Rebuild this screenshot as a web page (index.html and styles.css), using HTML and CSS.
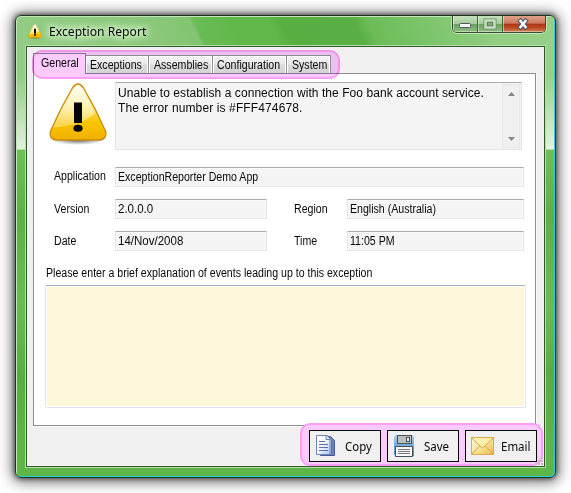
FILE: index.html
```html
<!DOCTYPE html>
<html lang="en">
<head>
<meta charset="utf-8">
<title>Exception Report</title>
<link rel="stylesheet" href="styles.css">
</head>
<body>
<svg class="defs" width="0" height="0" aria-hidden="true">
  <defs>
    <linearGradient id="gold" x1="0" y1="0" x2="0" y2="1">
      <stop offset="0" stop-color="#fff6c4"/><stop offset=".45" stop-color="#fbdc55"/>
      <stop offset=".7" stop-color="#f8c400"/><stop offset="1" stop-color="#f0b000"/>
    </linearGradient>
    <linearGradient id="shine" x1="0" y1="0" x2="0" y2="1">
      <stop offset="0" stop-color="#fff" stop-opacity=".75"/><stop offset="1" stop-color="#fff" stop-opacity=".3"/>
    </linearGradient>
    <linearGradient id="paper" x1="0" y1="0" x2="1" y2="1">
      <stop offset="0" stop-color="#fff"/><stop offset=".5" stop-color="#f2f6ff"/><stop offset="1" stop-color="#a5c2f2"/>
    </linearGradient>
    <linearGradient id="disk" x1="0" y1="0" x2="0" y2="1">
      <stop offset="0" stop-color="#a9d3f3"/><stop offset="1" stop-color="#4284c4"/>
    </linearGradient>
    <linearGradient id="mail" x1="0" y1="0" x2="1" y2="1">
      <stop offset="0" stop-color="#fffbdc"/><stop offset=".5" stop-color="#fbe49b"/><stop offset="1" stop-color="#ecb843"/>
    </linearGradient>
    <radialGradient id="ground"><stop offset="0" stop-color="#333" stop-opacity=".8"/><stop offset="1" stop-color="#555" stop-opacity="0"/></radialGradient>
    <symbol id="warning" viewBox="0 0 58 62">
      <ellipse cx="29" cy="57" rx="27" ry="5" fill="url(#ground)"/>
      <path d="M23.7 4.5Q29-2.5 34.3 4.5Q47 26 56.5 48Q58.5 56.5 50 57H8Q-.5 56.5 1.5 48Q11 26 23.7 4.5Z" fill="url(#gold)" stroke="#c98a0b" stroke-width="1.3"/>
      <path d="M24.7 5.5Q29-.5 33.3 5.5Q42 20 46 30Q34 42 4 44.5Q13 24 24.7 5.5Z" fill="url(#shine)"/>
      <rect x="25" y="19.500" width="8" height="20.500" fill="#050505"/>
      <ellipse cx="29" cy="45.300" rx="4.600" ry="3.500" fill="#050505"/>
    </symbol>
  </defs>
</svg>
<main class="window">
  <header class="titlebar">
    <svg class="title-icon" width="14" height="15"><use href="#warning"/></svg>
    <h1 class="title"><span>Exception Report</span></h1>
    <div class="controls">
      <button class="control" aria-label="Minimize"><svg width="24" height="17"><rect x="6.500" y="7.500" width="11" height="4" rx="1" fill="#f5f5f5" stroke="#53566b"/></svg></button>
      <button class="control" aria-label="Maximize"><svg width="24" height="17"><rect x="7.500" y="4.500" width="9" height="7" fill="none" stroke="#6e8a69" stroke-width="4"/><rect x="7.500" y="4.500" width="9" height="7" fill="none" stroke="#c5dcbf" stroke-width="2.500"/><rect x="9.500" y="6.500" width="5" height="3" fill="#86b27a" stroke="#668561"/></svg></button>
      <button class="control close" aria-label="Close"><svg width="41" height="17"><path d="M17.500 5l5 6M22.500 5l-5 6" stroke="#4e5068" stroke-width="4.600" stroke-linecap="square"/><path d="M17.500 5l5 6M22.500 5l-5 6" stroke="#fafafa" stroke-width="2.600" stroke-linecap="square"/></svg></button>
    </div>
  </header>
  <div class="client">
    <nav class="tabs">
      <a class="tab active"><span>General</span></a>
      <a class="tab exceptions"><span>Exceptions</span></a>
      <a class="tab assemblies"><span>Assemblies</span></a>
      <a class="tab configuration"><span>Configuration</span></a>
      <a class="tab system"><span>System</span></a>
      <i class="marker tab-marker"></i>
    </nav>
    <section class="page">
      <div class="summary">
        <svg class="warning-icon" width="58" height="62"><use href="#warning"/></svg>
        <div class="message">
          <p>Unable to establish a connection with the Foo bank account service.<br><span class="spaced">The error number is #FFF474678.</span></p>
          <div class="scrollbar">
            <svg width="9" height="5"><path d="M4.500 0L8 4H1Z" fill="#858585"/></svg>
            <svg width="9" height="5"><path d="M4.500 5L8 1H1Z" fill="#858585"/></svg>
          </div>
        </div>
      </div>
      <div class="form">
        <label class="label raised"><span>Application</span></label><div class="field full"><span>ExceptionReporter Demo App</span></div>
        <label class="label"><span>Version</span></label><div class="field short"><span class="wide">2.0.0.0</span></div>
        <label class="label"><span>Region</span></label><div class="field"><span>English (Australia)</span></div>
        <label class="label"><span>Date</span></label><div class="field short"><span class="wide">14/Nov/2008</span></div>
        <label class="label"><span>Time</span></label><div class="field"><span>11:05 PM</span></div>
      </div>
      <div class="prompt"><span>Please enter a brief explanation of events leading up to this exception</span></div>
      <div class="explanation"></div>
    </section>
    <footer class="actions">
      <i class="marker action-marker"></i>
      <button class="action">
        <svg width="22" height="24"><path d="M5.500 2.500h10l4 4v15h-14Z" fill="#6c82be" stroke="#485a94"/><path d="M3.500 1.500h9l4 4v15h-13Z" fill="#bcd0f5" stroke="#5870ac"/><path d="M1.500 1.500h9.500l4 4v15H1.500Z" fill="url(#paper)" stroke="#7085b6"/><path d="M11 1.500v4h4" fill="#e4ecfc" stroke="#7085b6"/><path d="M4 7.500h6M4 10.500h9M4 13.500h9M4 16.500h9" stroke="#5870a2"/></svg>
        <span>Copy</span>
      </button>
      <button class="action save">
        <svg width="22" height="24"><path d="M2 1h18l1 2v19H3l-2-2V3Z" fill="url(#disk)"/><rect x="4.500" y="1.500" width="14" height="8" fill="#b9bec1" stroke="#4b5054"/><rect x="13.500" y="3.500" width="3" height="4" fill="#f0f0f0" stroke="#484b4e"/><path d="M2.500 12.500h17v10h-17Z" fill="#f9f9f9" stroke="#4b5054"/><path d="M5 15.500h12M5 17.500h12M5 19.500h12" stroke="#777"/></svg>
        <span>Save</span>
      </button>
      <button class="action mail">
        <svg width="23" height="19"><rect x=".5" y=".5" width="22" height="17" fill="url(#mail)" stroke="#d8ad50"/><path d="M1 17L9 8.500M22 17l-8-8.500" fill="none" stroke="#d3a648"/><path d="M1 1l9 9q1.500 1.300 3 0l9-9" fill="#fff0ad" fill-opacity=".7" stroke="#d3a648"/></svg>
        <span>Email</span>
      </button>
    </footer>
    <svg class="grip" width="8" height="8" aria-hidden="true"><path d="M6 0h2v2H6ZM3 3h2v2H3ZM6 3h2v2H6ZM0 6h2v2H0ZM3 6h2v2H3ZM6 6h2v2H6Z" fill="#c3b9c5"/></svg>
  </div>
</main>
</body>
</html>
```
FILE: styles.css
```css
* { box-sizing: border-box; }

body {
  margin: 0;
  padding: 15px;
  height: 493px;
  overflow: hidden;
  background: #fff;
  color: #080808;
  font: 12px/15px "Liberation Sans", Arial, sans-serif;
}

.defs { position: absolute; }

.window {
  display: flex;
  flex-direction: column;
  width: 541px;
  height: 463px;
  padding: 1px 1px 9px;
  border: 1px solid #19391d;
  border-radius: 6px;
  background:
    linear-gradient(180deg, rgba(255,255,255,0) 60px, rgba(255,255,255,.72) 133px, rgba(255,255,255,0) 134px),
    linear-gradient(180deg, transparent 133px, #6dc056 134px, #5cb044 200px, #6abc52 290px, #57ad3f 360px, #5fb647 440px),
    linear-gradient(90deg, #93cc84 0, #8bc87a 120px, #6cbc56 355px, #8aca78 430px, #98d08a 100%);
  box-shadow: inset 1px 1px 0 #c4e6bb, inset -1px -1px 0 #28d0df, 0 0 4px 1px rgba(0,0,0,.5), 0 1px 14px 3px rgba(0,0,0,.55);
}

.titlebar {
  display: flex;
  flex: 0 0 28px;
  padding: 0 8px;
  border-radius: 5px 5px 0 0;
  background: linear-gradient(66deg, #93cc84 0, #8bc87a 130px, #82c471 168px, #6abb55 172px, #60b84a 205px, #5fb849 240px, #57ae41 252px, #59af43 318px, #6cbc58 330px, #7fc66e 390px, #91cd82 440px, #98d08a 100%);
}

.title-icon { margin: 7px 0 0 3px; }

.title {
  margin: 6px auto 0 7px;
  width: 120px;
  white-space: nowrap;
  font: 13px/17px "Noto Sans", sans-serif;
  text-shadow: 0 0 5px #e5f7df, 0 0 8px #e5f7df, 0 0 10px #d3edcb, 0 0 12px #d3edcb;
}

.title span, .action span, .tab span, .label span, .field span, .prompt span {
  display: inline-block;
  transform: scaleX(.883);
  transform-origin: 0 50%;
  white-space: nowrap;
}

.title span { transform: scaleX(.935); }
.field span.wide { transform: scaleX(.96); }

.controls {
  display: flex;
  width: 94px;
  height: 17px;
  margin-top: -1px;
  overflow: hidden;
  border: 1px solid #344f31;
  border-top: 0;
  border-radius: 0 0 5px 5px;
  box-shadow: 0 1px 0 #c4e6bb, 1px 0 0 #c4e6bb, -1px 0 0 #b2dba6;
}

.control {
  flex: 0 0 25px;
  padding: 0;
  border: 0;
  border-right: 1px solid #42663d;
  background: linear-gradient(#c5e0bd, #a4cc99 48%, #689f5b 50%, #90bf83);
  box-shadow: inset 1px 0 0 rgba(255,255,255,.45), inset 0 -1px 0 rgba(255,255,255,.4);
}

.control svg { display: block; }
.close { flex: 1; border: 0; background: linear-gradient(#dfa28c, #cd775c 46%, #a83515 49%, #c14c22 75%, #cf865e); }

.client {
  position: relative;
  display: flex;
  flex: 1;
  flex-direction: column;
  margin: 0 8px;
  padding: 1px 7px 0;
  border: 1px solid #b4deaa;
  outline: 1px solid #2c5b26;
  outline-offset: -2px;
  background: #f0f0f0;
}

.grip { position: absolute; right: 2px; bottom: 2px; }

.tabs {
  position: relative;
  display: flex;
  align-items: flex-end;
  height: 26px;
}

.tab {
  position: relative;
  z-index: 2;
  height: 18px;
  padding: 2px 0 0 4px;
  border: 1px solid #8b8d99;
  border-bottom: 0;
  box-shadow: inset 1px 1px 0 #fff, inset -1px 0 0 #fff;
  background: linear-gradient(#f3f3f3, #e9e9e9 49%, #dcdcdc 51%, #d3d3d3);
}

.tab + .tab { border-left: 0; }
.tab.active { z-index: 0; width: 53px; height: 21px; margin-bottom: -1px; padding: 2px 0 0 7px; background: #fff; box-shadow: none; }
.exceptions { width: 63px; }
.assemblies { width: 64px; padding-left: 5px; }
.configuration { width: 74px; padding-left: 4px; }
.system { width: 44px; padding-left: 5px; }

.marker {
  position: absolute;
  border: 2px solid #fd9ef6;
  border-radius: 10px;
}

.tab-marker {
  z-index: 1;
  left: -1px;
  top: 3px;
  width: 308px;
  height: 29px;
  background: #fbcbff;
  mix-blend-mode: multiply;
}

.action-marker {
  top: -7px;
  right: -6px;
  width: 243px;
  height: 43px;
  background: #fbcbff;
}

.page {
  width: 503px;
  height: 353px;
  border: 1px solid #8b8d99;
  background: #fff;
  box-shadow: 1px 1px 0 #fafafa;
}

.summary { display: flex; padding: 8px 0 0 14px; }
.warning-icon { flex: none; margin: 1px 8px 0 1px; }

.message {
  display: flex;
  width: 407px;
  height: 68px;
  padding: 1px;
  border: 1px solid #e3e3eb;
  border-top-color: #a9abb5;
  background: #f4f4f4;
}

.message p { flex: 1; margin: 2px 0 0 1px; white-space: nowrap; letter-spacing: .065px; }
.message .spaced { letter-spacing: .12px; }

.scrollbar {
  display: flex;
  flex-direction: column;
  justify-content: space-between;
  align-items: center;
  width: 18px;
  padding: 7px 0 6px;
  border: 1px solid #e7e7e7;
  background: #f0f0f0;
}

.form {
  display: grid;
  grid-template-columns: 61px 179px 53px 177px;
  grid-auto-rows: 20px;
  row-gap: 12px;
  margin: 17px 0 0 20px;
}

.label { padding-top: 3px; }
.label.raised { padding-top: 2px; }
.field { padding: 2px 0 0 2px; border: 1px solid #e2e3ec; border-top-color: #a9abb5; border-radius: 1px; background: #f4f4f4; box-shadow: inset 0 0 0 1px #fafafa; }
.field.full { grid-column: 2 / 5; }
.field.short { width: 152px; }
.prompt { height: 15px; margin: 15px 0 0 12px; }

.explanation {
  width: 481px;
  height: 123px;
  margin: 4px 0 0 11px;
  border: 1px solid #e2e3ec;
  border-top-color: #a9abb5;
  border-radius: 2px;
  background: #fff7dc;
  box-shadow: inset 0 0 0 1px #fff;
}

.actions {
  position: relative;
  display: flex;
  justify-content: flex-end;
  gap: 6px;
  height: 32px;
  margin: 4px 1px 0 0;
}

.action {
  position: relative;
  display: flex;
  align-items: center;
  width: 72px;
  height: 32px;
  padding: 0 0 0 5px;
  border: 1px solid #080808;
  background: #f0f0f0;
  color: #080808;
  font: 13px/17px "Noto Sans", sans-serif;
}

.action svg { flex: none; margin-right: 8px; }
.action.save svg { margin-right: 9px; }
.action.mail svg { margin-right: 7px; }
```
